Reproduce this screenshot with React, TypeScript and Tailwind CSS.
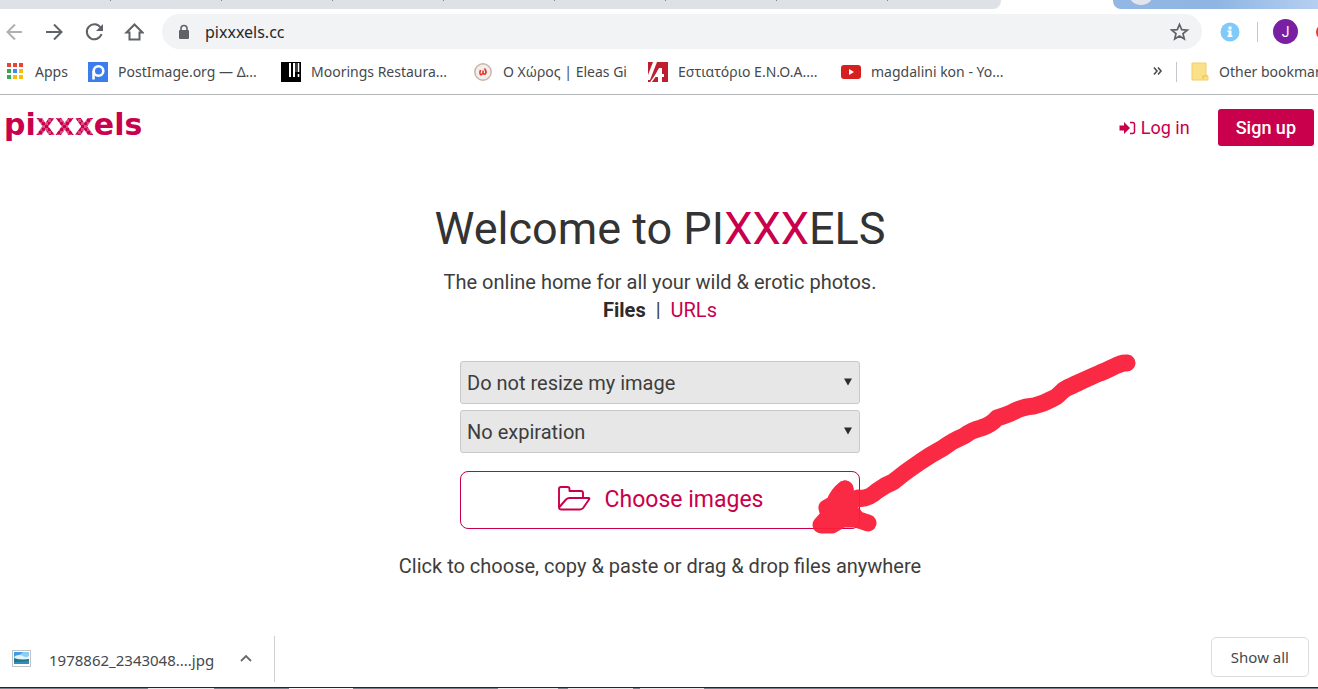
import React from "react";

const ui = "font-['Noto_Sans',sans-serif]";

function TabStrip() {
  return (
    <div className="flex h-[9px] justify-between overflow-hidden">
      <div className="flex w-[1001px] rounded-br-lg bg-[#dee1e6]">
        {Array.from({ length: 8 }, (_, i) => (
          <div key={i} className="h-px w-[111px] border-r border-[#80868b]" />
        ))}
      </div>
      <div className="w-[205px] overflow-hidden rounded-bl-lg bg-linear-to-r from-[#93b7e3] via-[#8fb5e4] to-[#b5cff0]">
        <svg width="60" height="9" viewBox="0 0 60 9">
          <circle cx="28" cy="-8" r="13" fill="#e2e6ec" />
        </svg>
      </div>
    </div>
  );
}

function Toolbar() {
  const stroke = { fill: "none", stroke: "#5f6368", strokeWidth: 2 };
  return (
    <div className="flex h-[45px] items-center overflow-hidden">
      <div className="flex w-[162px] shrink-0 items-center gap-5 pl-1">
        <button aria-label="Back" className="opacity-50">
          <svg width="20" height="20" viewBox="0 0 20 20" {...stroke}>
            <path d="M18 10H4M11 2.500L3.500 10L11 17.500" />
          </svg>
        </button>
        <button aria-label="Forward">
          <svg width="20" height="20" viewBox="0 0 20 20" {...stroke}>
            <path d="M2 10H17M10 2.500L17.500 10L10 17.500" />
          </svg>
        </button>
        <button aria-label="Reload">
          <svg width="20" height="20" viewBox="0 0 20 20" {...stroke}>
            <path d="M16.500 5.500A7.500 7.500 0 1 0 17.500 12" />
            <path d="M19 2V9H12Z" fill="#5f6368" stroke="none" />
          </svg>
        </button>
        <button aria-label="Home">
          <svg width="20" height="20" viewBox="0 0 20 20" {...stroke}>
            <path d="M2.500 10.500H5.500V17.500H15.500V10.500H18.500L10.500 2.500Z" />
          </svg>
        </button>
      </div>
      <div className="flex h-[35px] flex-1 items-center rounded-full bg-[#f1f3f4] pr-3 pl-4">
        <svg width="12" height="16" viewBox="0 0 12 16" aria-hidden="true">
          <rect x="1" y="6" width="10" height="9" rx="1" fill="#5f6368" />
          <path d="M3 7V4.500a3 3 0 0 1 6 0V7" fill="none" stroke="#5f6368" strokeWidth="1.600" />
        </svg>
        <input
          aria-label="Address"
          defaultValue="pixxxels.cc"
          className={`${ui} ml-[15px] min-w-0 flex-1 bg-transparent text-base text-[#26282b] outline-none`}
        />
        <button aria-label="Bookmark this page">
          <svg width="20" height="20" viewBox="0 0 20 20">
            <path
              d="M9.500 2.500L11.700 7.700L17.300 8.100L13 11.600L14.300 17L9.500 14L4.700 17L6 11.600L1.700 8.100L7.300 7.700Z"
              fill="none"
              stroke="#5f6368"
              strokeWidth="1.700"
            />
          </svg>
        </button>
      </div>
      <div className="flex w-[116px] shrink-0 items-center">
        <button aria-label="Info" className="ml-[18px] shrink-0">
          <svg width="20" height="20" viewBox="0 0 20 20">
            <circle cx="10" cy="10" r="9.500" fill="#7fcaf9" />
            <rect x="8.500" y="4.500" width="3" height="3" fill="#fff" />
            <path d="M7.500 8.500H11.500V13.500H12.500V15H7.500V13.500H8.500V10H7.500Z" fill="#fff" />
          </svg>
        </button>
        <div className="ml-[17px] h-5 w-px shrink-0 bg-[#c4c7cb]" />
        <button className="ml-[15px] size-[25px] shrink-0 rounded-full bg-[#7b1fa2] font-[Roboto,sans-serif] text-sm leading-6 text-white">
          J
        </button>
        <div className="ml-[18px] size-4 shrink-0 rounded-full bg-[#e33a2e]" />
      </div>
    </div>
  );
}

const appColours = ["#ea4335", "#ea4335", "#ea4335", "#34a853", "#4285f4", "#fbbc05", "#34a853", "#fbbc05", "#fbbc05"];

const icons = {
  apps: (
    <svg width="19" height="20" viewBox="0 0 19 20">
      {appColours.map((c, i) => (
        <rect key={i} x={1 + (i % 3) * 6} y={1 + Math.floor(i / 3) * 6} width="4" height="4" fill={c} />
      ))}
    </svg>
  ),
  post: (
    <svg width="20" height="20" viewBox="0 0 20 20">
      <rect width="20" height="20" fill="#3b7ded" />
      <circle cx="10.500" cy="9" r="4.800" fill="none" stroke="#fff" strokeWidth="2.600" />
      <path d="M5.500 9V17.500" stroke="#fff" strokeWidth="2.600" />
    </svg>
  ),
  moorings: (
    <svg width="20" height="20" viewBox="0 0 20 20">
      <rect width="20" height="20" fill="#000" />
      <path d="M9 1V15M13 1V15" stroke="#fff" strokeWidth="2" />
      <path d="M17.500 1V10M17.500 12V15" stroke="#fff" strokeWidth="1.600" />
      <path d="M15 1V10" stroke="#777" strokeWidth="1" />
    </svg>
  ),
  eleas: (
    <svg width="20" height="20" viewBox="0 0 20 20">
      <circle cx="10" cy="10" r="8.200" fill="#f1eeee" stroke="#cbb5a6" strokeWidth="1.500" />
      <path d="M7.500 8C6 12.500 8 14 10 11V8.500M10 11C11.500 14 15 11 11.500 6.500" fill="none" stroke="#e5392d" strokeWidth="1.600" />
    </svg>
  ),
  enoa: (
    <svg width="20" height="20" viewBox="0 0 20 20">
      <rect width="20" height="20" fill="#be1e2d" />
      <path d="M0 13L5 0H9L2 18H0Z" fill="#fff" />
      <path d="M7 13L11 6H14V12H16V15H14V20H10V15H7Z" fill="#fff" />
      <path d="M3 20L8 13" stroke="#fff" strokeWidth="1.500" />
    </svg>
  ),
  youtube: (
    <svg width="20" height="20" viewBox="0 0 20 20">
      <rect y="3" width="20" height="14" rx="3" fill="#d61f1f" />
      <path d="M8 7L13 10L8 13Z" fill="#fff" />
    </svg>
  ),
};

const bookmarks = [
  { icon: icons.apps, label: "Apps", width: "w-[82px]" },
  { icon: icons.post, label: "PostImage.org — Δ...", width: "w-[193px]" },
  { icon: icons.moorings, label: "Moorings Restaura...", width: "w-[192px]" },
  { icon: icons.eleas, label: "Ο Χώρος | Eleas Gi", width: "w-[175px]" },
  { icon: icons.enoa, label: "Εστιατόριο Ε.Ν.Ο.Α....", width: "w-[193px]" },
  { icon: icons.youtube, label: "magdalini kon - Yo...", width: "w-[193px]" },
];

function BookmarkBar() {
  return (
    <nav
      aria-label="Bookmarks"
      className={`${ui} flex h-[41px] items-center overflow-hidden border-b border-[#b4b5b7] pb-[5px] pl-[6px] text-sm whitespace-nowrap text-[#45494d]`}
    >
      {bookmarks.map((b) => (
        <a key={b.label} href="#" className={`flex shrink-0 items-center gap-[10px] ${b.width}`}>
          {b.icon}
          {b.label}
        </a>
      ))}
      <div className="ml-auto flex w-[166px] shrink-0 items-center">
        <button aria-label="More bookmarks" className="shrink-0">
          <svg width="12" height="20" viewBox="0 0 12 20" fill="none" stroke="#4a4d51" strokeWidth="1.600">
            <path d="M2 5.500L5 9L2 12.500M6 5.500L9 9L6 12.500" />
          </svg>
        </button>
        <div className="ml-3 h-5 w-px shrink-0 bg-[#c4c7cb]" />
        <a href="#" className="ml-[14px] flex items-center gap-[10px]">
          <svg width="18" height="20" viewBox="0 0 18 20" className="shrink-0">
            <path d="M1 1H15V13L17 14V18H1Z" fill="#fbe08a" />
            <path d="M1 1H15V13L17 14V18H1Z" fill="none" stroke="#f3cf63" />
            <path d="M12 17V14H16" fill="none" stroke="#e9bd45" />
          </svg>
          Other bookmarks
        </a>
      </div>
    </nav>
  );
}

function SelectBox({ label, value }: { label: string; value: string }) {
  return (
    <div className="relative">
      <select
        aria-label={label}
        className="h-[43px] w-full appearance-none rounded-[3px] border border-[#c9c9c9] bg-[#e7e7e7] px-[6px] text-xl text-[#3d3d3d]"
      >
        <option>{value}</option>
      </select>
      <svg width="8" height="8" viewBox="0 0 8 8" className="pointer-events-none absolute top-[17px] right-2">
        <path d="M0 0.500H8L4 7.500Z" fill="#2d2d2d" />
      </svg>
    </div>
  );
}

function MarkerArrow() {
  return (
    <svg
      width="330"
      height="186"
      viewBox="808 351 330 186"
      aria-hidden="true"
      className="pointer-events-none absolute top-[256px] left-1/2 ml-[149px] opacity-95"
      fill="none"
      stroke="#fb1f3a"
      strokeLinecap="round"
      strokeLinejoin="round"
    >
      <path
        strokeWidth="17"
        d="M1127 363C1120 362 1113 368 1100 373C1088 378 1078 383 1067 388C1060 391 1060 396 1052 399Q1043 404 1034 406Q1022 407 1015 411Q1008 415 997 418Q991 425 981 428Q972 430 964 436Q952 441 943 448Q930 455 920 462Q905 472 893 482Q885 485 877 491Q867 500 858 498L845 505"
      />
      <path strokeWidth="17" d="M845 489Q838 494 834 504L827 508L829 516L821 525H832L842 519H856L868 523" />
      <path strokeWidth="17" d="M845 489L847 505L836 515L854 515" />
    </svg>
  );
}

function Page() {
  return (
    <main className="relative flex-1 font-[Roboto,sans-serif] text-[#3d3d3d]">
      <header className="flex items-start justify-between pt-[14px] pr-1 pl-1">
        <a href="#" className="font-['DejaVu_Sans',sans-serif] text-[30px] leading-8 font-bold text-[#c9004b]">
          pi
          <span className="bg-[repeating-conic-gradient(#c9004b_0_25%,#d94a80_0_50%)] bg-size-[6px_6px] bg-clip-text text-transparent">
            xxx
          </span>
          els
        </a>
        <div className="flex items-center gap-7 text-lg">
          <a href="#" className="flex items-center gap-[5px] text-[#c9004b]">
            <svg width="17" height="14" viewBox="0 0 17 14">
              <path d="M0.500 4.500H5V1L11 7L5 13V9.500H0.500Z" fill="#c9004b" />
              <path d="M11 1.500H13.500Q15.500 1.500 15.500 3.500V10.500Q15.500 12.500 13.500 12.500H11" fill="none" stroke="#c9004b" strokeWidth="1.500" />
            </svg>
            Log in
          </a>
          <a href="#" className="flex h-[37px] items-center rounded-[3px] bg-[#c9004b] px-[18px] font-medium text-white">
            Sign up
          </a>
        </div>
      </header>

      <div className="flex flex-col items-center pt-[53px] pl-[2px]">
        <h1 className="text-[45px] leading-[60px] text-[#333]">
          Welcome to PI<span className="text-[#c9004b]">XXX</span>ELS
        </h1>
        <p className="mt-[9px] text-xl leading-7">The online home for all your wild &amp; erotic photos.</p>
        <div className="flex gap-[10px] text-xl leading-7">
          <b className="font-bold text-[#2b2b2b]">Files</b>
          <span>|</span>
          <a href="#" className="text-[#c9004b]">URLs</a>
        </div>
        <form className="mt-[37px] flex w-full max-w-[400px] flex-col gap-[6px]">
          <SelectBox label="Resize" value="Do not resize my image" />
          <SelectBox label="Expiration" value="No expiration" />
          <button
            type="button"
            className="mt-3 flex h-[58px] items-center justify-center gap-[14px] rounded-lg border border-[#c9004b] bg-white text-[23px] text-[#c9004b]"
          >
            <svg width="34" height="26" viewBox="0 0 34 26" fill="none" stroke="#c9004b" strokeWidth="1.900" strokeLinejoin="round" className="mb-1">
              <path d="M2 22V4Q2 2 4 2H10.500Q12.500 2 12.500 4V6H24Q26 6 26 8V13" />
              <path d="M2 22.500L9 14.500Q10.500 13 12.500 13H31.500Q33 13 32 14.500L26.500 22.500Q25 24.500 23 24.500H4Q2 24.500 2 22.500Z" />
            </svg>
            Choose images
          </button>
        </form>
        <p className="mt-[23px] text-xl leading-7">Click to choose, copy &amp; paste or drag &amp; drop files anywhere</p>
      </div>
      <MarkerArrow />
    </main>
  );
}

function DownloadShelf() {
  return (
    <footer className={`${ui} flex h-[56px] items-center justify-between pr-[9px] pl-3 text-[#45494d]`}>
      <div className="flex h-[46px] items-center border-r border-[#cfcfcf] pr-[21px]">
        <button className="flex items-center gap-[17px] pt-[3px] text-[15px]">
          <svg width="20" height="18" viewBox="0 0 20 18" className="mb-1">
            <rect x="0.500" y="0.500" width="18" height="16" fill="#fff" stroke="#bfc3c6" />
            <rect x="2" y="2" width="15" height="12" fill="#8ecbf5" />
            <path d="M2 2H11L6 6L2 7Z" fill="#3f9be6" />
            <path d="M3 6Q8 4 11 6T17 6V9H2Z" fill="#e3f3fc" />
            <path d="M2 8Q9 11 17 9V14H2Z" fill="#27757e" />
            <path d="M2 12L17 11V14H2Z" fill="#2c8cc8" />
          </svg>
          1978862_2343048....jpg
        </button>
        <button aria-label="Download options" className="ml-[25px]">
          <svg width="14" height="14" viewBox="0 0 14 14" fill="none" stroke="#666a6e" strokeWidth="1.800">
            <path d="M2 9L7 4L12 9" />
          </svg>
        </button>
      </div>
      <button className="mb-1 h-10 rounded-[5px] border border-[#dadce0] px-[19px] text-[15px]">Show all</button>
    </footer>
  );
}

function TaskbarEdge() {
  return (
    <div className="flex h-[2px] border-t border-[#1c2732] bg-[#74828e]">
      <div className="ml-[148px] w-[66px] bg-[#e4e8ea]" />
      <div className="ml-[75px] w-[64px] bg-[#f2f4f5]" />
      <div className="ml-[145px] w-[60px] bg-[#e4e8ea]" />
      <div className="ml-[10px] w-[65px] bg-[#e4e8ea]" />
      <div className="ml-[7px] w-[64px] bg-[#e4e8ea]" />
    </div>
  );
}

export default function App() {
  return (
    <div className="flex min-h-screen flex-col overflow-hidden bg-white">
      <TabStrip />
      <Toolbar />
      <BookmarkBar />
      <Page />
      <DownloadShelf />
      <TaskbarEdge />
    </div>
  );
}
